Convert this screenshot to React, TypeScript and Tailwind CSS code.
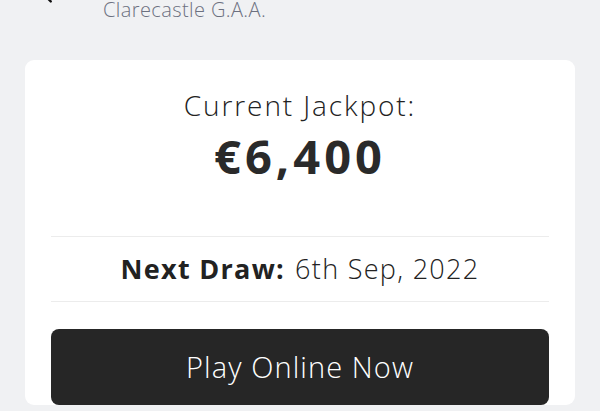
import React from "react";

const App = () => {
  return (
    <div
      className="min-h-screen bg-[#f0f1f3] px-[25px] overflow-hidden"
      style={{ fontFamily: "'Open Sans', 'Noto Sans', sans-serif" }}
    >
      <div className="relative h-[24px] -mt-[4px]">
        <svg
          width="22"
          height="22"
          viewBox="0 0 24 24"
          fill="none"
          stroke="#111"
          strokeWidth="2.5"
          strokeLinecap="round"
          strokeLinejoin="round"
          className="absolute left-[12px] -top-[12px]"
        >
          <path d="M15 5l-7 7 7 7" />
        </svg>
        <span className="absolute left-[78px] bottom-0 text-[20px] leading-none text-[#6c7080] tracking-[0.4px] font-light">
          Clarecastle G.A.A.
        </span>
      </div>

      <div className="mt-[40px] bg-white rounded-[9px] px-[26px] pt-[27px]">
        <div className="text-center text-[28px] leading-[36px] text-[#222] font-light tracking-[1.9px]">
          Current Jackpot:
        </div>
        <div className="mt-[6px] text-center text-[47px] leading-[54px] font-bold text-[#2a2a2a] tracking-[4px]">
          €6,400
        </div>

        <div className="mt-[53px] border-t border-[#ececec]" />
        <div className="h-[64px] flex items-center justify-center text-[27px] text-[#222]">
          <span className="font-bold tracking-[1.3px]">Next Draw:</span>
          <span className="ml-[10px] font-light tracking-[1.3px]">6th Sep, 2022</span>
        </div>
        <div className="border-t border-[#ececec]" />

        <button className="mt-[27px] w-full h-[76px] rounded-[8px] bg-[#262626] text-white text-[29px] font-light tracking-[1.1px]">
          Play Online Now
        </button>
      </div>
    </div>
  );
};

export default App;
